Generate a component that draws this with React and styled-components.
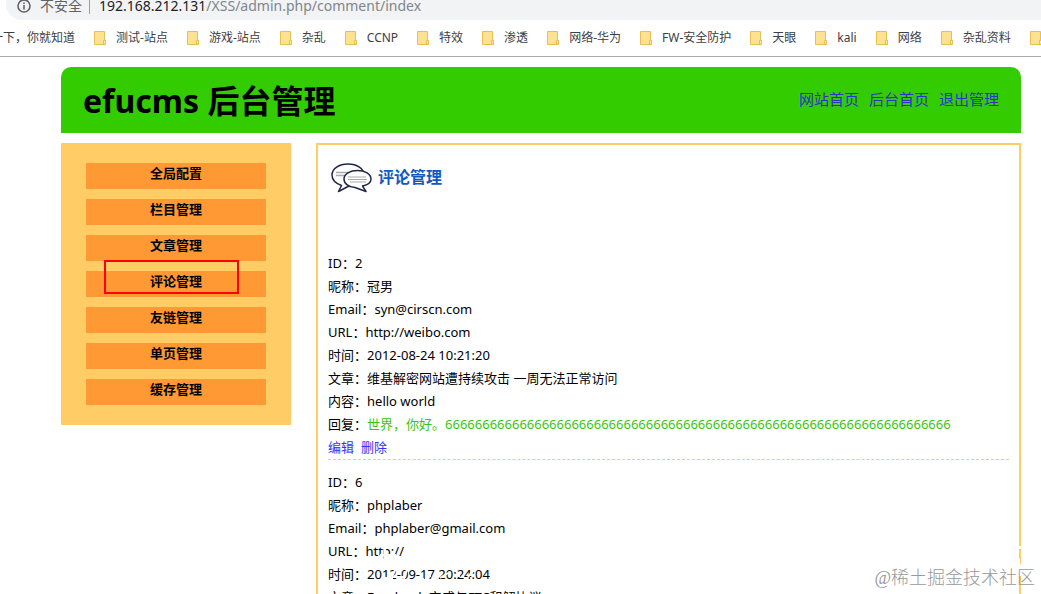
import React from "react";
import styled, { createGlobalStyle } from "styled-components";

const Global = createGlobalStyle`
  *, *::before, *::after { box-sizing: border-box; }
  html, body { margin: 0; background: #fff; }
  body {
    font-family: "Noto Sans", "Noto Sans CJK SC", sans-serif;
    font-size: 13px;
    color: #000;
  }
  h1, h2, p, ul { margin: 0; padding: 0; }
  ul { list-style: none; }
  a { color: inherit; text-decoration: none; }
`;

const Window = styled.div`
  position: relative;
  display: flex;
  flex-direction: column;
  height: 100vh;
  overflow: hidden;
`;

const AddressRow = styled.div`
  flex: none;
  padding-left: 6px;
`;

const AddressBar = styled.div`
  display: flex;
  align-items: center;
  height: 20px;
  padding: 0 0 8px 10px;
  border-bottom-left-radius: 16px;
  background: #f1f3f4;
  color: #5f6368;
  font-size: 14px;
  line-height: 20px;
  white-space: nowrap;
`;

const InfoIcon = styled.svg`
  flex: none;
  width: 16px;
  height: 16px;
  margin-right: 8px;
`;

const Divider = styled.span`
  width: 1px;
  height: 16px;
  margin: 0 9px 0 7px;
  background: #9aa0a6;
`;

const Host = styled.span`
  color: #202124;
`;

const Path = styled.span`
  color: #80868b;
`;

const Bookmarks = styled.nav`
  flex: none;
  display: flex;
  align-items: center;
  gap: 19px;
  height: 37px;
  margin-left: -9px;
  border-bottom: 1px solid #a9a9a9;
  overflow: hidden;
  color: #3c4043;
  font-size: 12px;
  line-height: 16px;
  white-space: nowrap;
`;

const Bookmark = styled.a`
  flex: none;
  display: flex;
  align-items: center;
`;

const FolderIcon = styled.svg`
  width: 13px;
  height: 16px;
  margin-right: 9px;
`;

const Page = styled.div`
  flex: none;
  padding: 10px 20px 0 61px;
`;

const Header = styled.header`
  display: flex;
  align-items: center;
  justify-content: space-between;
  height: 66px;
  padding: 2px 22px 0;
  border-radius: 10px 10px 0 0;
  background: #3c0;
`;

const SiteTitle = styled.h1`
  font-size: 32px;
  line-height: 40px;
  font-weight: 700;
`;

const HeaderLinks = styled.nav`
  display: flex;
  gap: 10px;
  padding-bottom: 4px;
  color: #2a35c8;
  font-size: 15px;
  line-height: 20px;
`;

const Columns = styled.div`
  display: flex;
  align-items: flex-start;
  gap: 25px;
  margin-top: 10px;
`;

const Sidebar = styled.nav`
  position: relative;
  flex: none;
  width: 230px;
  padding: 20px 25px;
  background: #fc6;
`;

const Menu = styled.ul`
  display: flex;
  flex-direction: column;
  gap: 10px;
`;

const MenuLink = styled.a`
  display: block;
  height: 26px;
  background: #f93;
  font-weight: 700;
  line-height: 20px;
  text-align: center;
`;

const Highlight = styled.span`
  position: absolute;
  top: 117px;
  left: 43px;
  width: 135px;
  height: 34px;
  border: 2px solid #f00;
  pointer-events: none;
`;

const Content = styled.main`
  position: relative;
  flex: 1;
  min-width: 0;
  padding: 10px;
  border: 2px solid #fc6;
`;

const ContentHead = styled.div`
  display: flex;
  align-items: center;
  height: 44px;
  margin-bottom: 53px;
`;

const CommentIcon = styled.svg`
  flex: none;
  width: 46px;
  height: 36px;
  margin-right: 4px;
`;

const ContentTitle = styled.h2`
  color: #1259c3;
  font-size: 16px;
  line-height: 24px;
  font-weight: 700;
`;

const Comment = styled.article`
  margin-bottom: 11px;
  border-bottom: 1px dashed #f0cd7c;
  line-height: 23px;
`;

const Field = styled.p`
  white-space: nowrap;
`;

const Reply = styled.span`
  color: #3dc412;
`;

const Actions = styled.div`
  display: flex;
  gap: 7px;
  color: #33f;
`;

const TextScuffs = styled.svg`
  position: absolute;
  top: 400px;
  left: 60px;
  width: 140px;
  height: 50px;
  pointer-events: none;
`;

const BorderScuffs = styled.svg`
  position: absolute;
  top: 400px;
  right: -2px;
  width: 2px;
  height: 50px;
  pointer-events: none;
`;

const Watermark = styled.div`
  position: absolute;
  right: 6px;
  bottom: 4px;
  color: #999;
  font-family: "Liberation Serif", "Noto Sans CJK SC", serif;
  font-size: 18px;
  font-weight: 300;
  line-height: 24px;
`;

const folders = ["测试-站点", "游戏-站点", "杂乱", "CCNP", "特效", "渗透", "网络-华为", "FW-安全防护", "天眼", "kali", "网络", "杂乱资料", ""];

const menu = ["全局配置", "栏目管理", "文章管理", "评论管理", "友链管理", "单页管理", "缓存管理"];

const comments = [
  {
    fields: [
      ["ID", "2"],
      ["昵称", "冠男"],
      ["Email", "syn@cirscn.com"],
      ["URL", "http://weibo.com"],
      ["时间", "2012-08-24 10:21:20"],
      ["文章", "维基解密网站遭持续攻击 一周无法正常访问"],
      ["内容", "hello world"],
    ],
    reply: "世界，你好。" + "6".repeat(68),
  },
  {
    fields: [
      ["ID", "6"],
      ["昵称", "phplaber"],
      ["Email", "phplaber@gmail.com"],
      ["URL", "http://"],
      ["时间", "2012-09-17 20:24:04"],
      ["文章", "Facebook 完成与FTC和解协议"],
    ],
  },
];

function Folder() {
  return (
    <FolderIcon viewBox="0 0 13 16" aria-hidden="true">
      <path d="M.5 1.5h10v9h1v4H.5z" fill="#fde293" stroke="#e8c04f" />
      <path d="M9.5 14v-3.500h2V14z" fill="#fff0b8" stroke="#e8c04f" />
    </FolderIcon>
  );
}

function Bubbles() {
  return (
    <CommentIcon viewBox="0 0 46 36" fill="#fff" stroke="#23264a" strokeWidth="1.5" strokeLinejoin="round" aria-hidden="true">
      <path d="M13.500 26.500C8 24.500 4 21 4 16 4 9.500 11 5 20 5s16 4.500 16 11-7 11.500-16 11.500L10.500 32.500z" />
      <path d="M8 13.500h13M8 16.500h10" stroke="#aaa" />
      <path d="M34.500 27C39.500 26 43 23.500 43 20c0-5-6-8.500-13.500-8.500S16 15 16 20s5 8 11 8.500l11 4z" />
      <path d="M20 18h18M20 20.500h19M22 23h16" stroke="#aaa" strokeWidth="1.200" />
    </CommentIcon>
  );
}

export default function App() {
  return (
    <Window>
      <Global />
      <AddressRow>
        <AddressBar>
          <InfoIcon viewBox="0 0 16 16" aria-hidden="true">
            <circle cx="8" cy="8" r="6" fill="none" stroke="#5f6368" strokeWidth="1.6" />
            <path d="M7.2 7h1.6v4.4H7.2zM7.2 4.4h1.6V6H7.2z" fill="#5f6368" />
          </InfoIcon>
          <span>不安全</span>
          <Divider />
          <Host>192.168.212.131</Host>
          <Path>/XSS/admin.php/comment/index</Path>
        </AddressBar>
      </AddressRow>
      <Bookmarks>
        <Bookmark href="#">一下，你就知道</Bookmark>
        {folders.map((name) => (
          <Bookmark href="#" key={name}>
            <Folder />
            {name}
          </Bookmark>
        ))}
      </Bookmarks>
      <Page>
        <Header>
          <SiteTitle>efucms 后台管理</SiteTitle>
          <HeaderLinks>
            <a href="#">网站首页</a>
            <a href="#">后台首页</a>
            <a href="#">退出管理</a>
          </HeaderLinks>
        </Header>
        <Columns>
          <Sidebar>
            <Menu>
              {menu.map((name) => (
                <li key={name}>
                  <MenuLink href="#">{name}</MenuLink>
                </li>
              ))}
            </Menu>
            <Highlight />
          </Sidebar>
          <Content>
            <ContentHead>
              <Bubbles />
              <ContentTitle>评论管理</ContentTitle>
            </ContentHead>
            {comments.map((c) => (
              <Comment key={c.fields[0][1]}>
                {c.fields.map(([label, value]) => (
                  <Field key={label}>
                    {label}：{value}
                  </Field>
                ))}
                {c.reply && (
                  <Field>
                    回复：<Reply>{c.reply}</Reply>
                  </Field>
                )}
                <Actions>
                  <a href="#">编辑</a>
                  <a href="#">删除</a>
                </Actions>
              </Comment>
            ))}
            <TextScuffs viewBox="0 0 140 50" fill="none" stroke="#fff" strokeWidth="2" aria-hidden="true">
              <path d="M2 10h16M7 3v11M5 33h10M17 25l-5 12M22 32h6M29 24l-4 14M38 34h8M52 26v6M62 33l8-5M77 31h5M90 32l5-6" />
            </TextScuffs>
            <BorderScuffs viewBox="0 0 2 50" fill="#fff" aria-hidden="true">
              <path d="M0 1h2v3H0zM0 14h1v5H0zM0 19h2v12H0z" />
            </BorderScuffs>
          </Content>
        </Columns>
      </Page>
      <Watermark>@稀土掘金技术社区</Watermark>
    </Window>
  );
}
